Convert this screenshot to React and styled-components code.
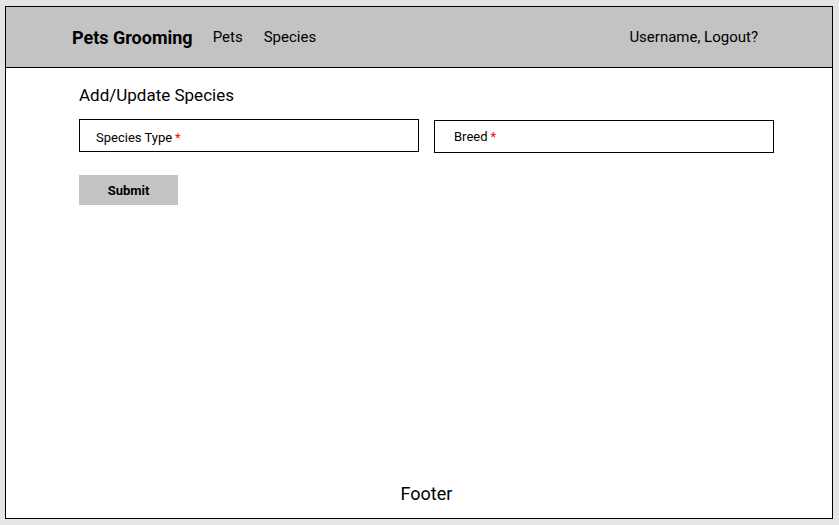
import React from "react";
import styled, { createGlobalStyle } from "styled-components";

const Global = createGlobalStyle`
  html, body { margin: 0; padding: 0; background: #e5e5e5; }
  body { font-family: Roboto, "Liberation Sans", Arial, sans-serif; color: #000; }
  * { box-sizing: border-box; }
`;

const Frame = styled.div`
  margin: 6px 0 0 5px;
  width: 828px;
  height: 513px;
  border: 1px solid #000;
  background: #fff;
  display: flex;
  flex-direction: column;
`;

const Header = styled.header`
  height: 61px;
  background: #c3c3c3;
  border-bottom: 1px solid #000;
  display: flex;
  align-items: center;
  padding: 0 74px 0 66px;
`;

const Brand = styled.div`
  font-size: 18px;
  font-weight: 700;
  margin-right: 20px;
`;

const NavLink = styled.a`
  font-size: 15px;
  color: #000;
  text-decoration: none;
  margin-right: 21px;
`;

const Spacer = styled.div`
  flex: 1;
`;

const User = styled.div`
  font-size: 15px;
`;

const Main = styled.main`
  flex: 1;
  margin-left: 73px;
  width: 695px;
  display: flex;
  flex-direction: column;
`;

const Title = styled.h1`
  margin: 17px 0 0;
  font-size: 17px;
  font-weight: 400;
  line-height: 20px;
`;

const Fields = styled.div`
  display: grid;
  grid-template-columns: 340px 340px;
  column-gap: 15px;
  margin-top: 14px;
  align-items: start;
`;

const Field = styled.div`
  height: 33px;
  border: 1px solid #000;
  display: flex;
  align-items: center;
  padding-left: ${(p) => p.$pad}px;
  padding-top: ${(p) => p.$top}px;
  margin-top: ${(p) => p.$offset || 0}px;
  font-size: 13px;
`;

const Req = styled.span`
  color: #ff0000;
  margin-left: 3px;
`;

const Submit = styled.button`
  margin-top: 22px;
  width: 99px;
  height: 30px;
  border: none;
  background: #c3c3c3;
  font-family: Roboto, "Liberation Sans", Arial, sans-serif;
  font-size: 13px;
  font-weight: 700;
  color: #000;
  padding: 0;
`;

const Footer = styled.footer`
  margin-top: auto;
  text-align: center;
  font-size: 18px;
  line-height: 20px;
  padding-bottom: 14px;
`;

export default function App() {
  return (
    <>
      <Global />
      <Frame>
        <Header>
          <Brand>Pets Grooming</Brand>
          <NavLink href="#">Pets</NavLink>
          <NavLink href="#">Species</NavLink>
          <Spacer />
          <User>Username, Logout?</User>
        </Header>
        <Main>
          <Title>Add/Update Species</Title>
          <Fields>
            <Field $pad={16} $top={4}>
              Species Type<Req>*</Req>
            </Field>
            <Field $pad={19} $top={0} $offset={1}>
              Breed<Req>*</Req>
            </Field>
          </Fields>
          <div>
            <Submit>Submit</Submit>
          </div>
          <Footer>Footer</Footer>
        </Main>
      </Frame>
    </>
  );
}
